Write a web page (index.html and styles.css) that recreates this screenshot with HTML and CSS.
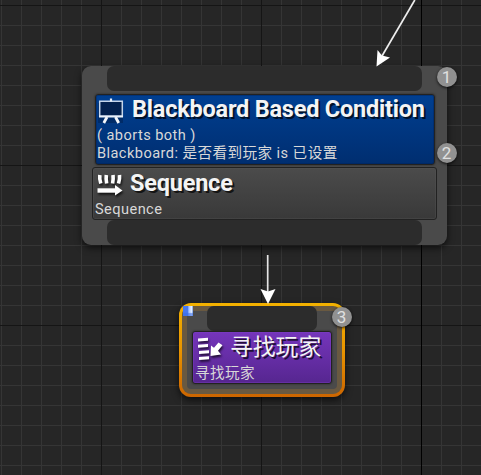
FILE: index.html
```html
<!DOCTYPE html>
<html lang="zh-CN">
<head>
<meta charset="utf-8">
<title>Behavior Tree</title>
<link rel="stylesheet" href="styles.css">
</head>
<body>
<main class="canvas">
  <section class="node composite">
    <div class="pin"></div>
    <div class="block decorator">
      <div class="heading">
        <svg class="icon" width="26" height="28" viewBox="0 0 26 28">
          <path d="M1 5h25v20H1z" fill="#001c48" opacity=".45"/>
          <path d="M2.700 3.200h22.600v15H2.700z" fill="#03214f" stroke="#c5d5ea" stroke-width="1.500"/>
          <path d="M2 18.500h24M14 .5v3" stroke="#e9f1fb" stroke-width="2.200"/>
          <path d="M10 19l-3.200 6M18.500 19l3.200 6" stroke="#f3f7fc" stroke-width="2.800"/>
        </svg>
        <h1 class="title">Blackboard Based Condition</h1>
      </div>
      <p class="detail">( aborts both )</p>
      <p class="detail">Blackboard: 是否看到玩家 is 已设置</p>
    </div>
    <div class="block sequence">
      <div class="heading">
        <svg class="icon" width="26" height="24" viewBox="0 0 26 24">
          <g class="glyph" fill="none" stroke="#fff">
            <path d="M2.800 3q-.5 4 1 8.500M9.300 3q-.5 4 .4 8.500M16 3q.5 4-.4 8.500M22.500 3q.5 4-1 8.500" stroke-width="3.600"/>
            <path d="M.5 18.500h19" stroke-width="4.400"/>
            <path d="M18 13l7.500 5.500-7.500 5z" fill="#fff" stroke="none"/>
          </g>
        </svg>
        <h1 class="title">Sequence</h1>
      </div>
      <p class="detail">Sequence</p>
    </div>
    <div class="pin"></div>
    <span class="badge first">1</span>
    <span class="badge second">2</span>
  </section>

  <section class="node task">
    <div class="task-body">
      <div class="pin"></div>
      <div class="block action">
        <div class="heading">
          <svg class="icon" width="26" height="25" viewBox="0 0 26 25">
            <g class="glyph" fill="#fff">
              <path d="M1 2.500l10-.7v3l-10 .7zM1 8.700l10-.7v3l-10 .7zM2 14.900l10-.7v3l-10 .7zM2 20.900l10-.7v3l-10 .7z"/>
              <path d="M14 9.500l3 2.200 4.500-5.200 4 2.700-4.500 5.500 3 3.800L13.500 20z"/>
            </g>
          </svg>
          <h1 class="title">寻找玩家</h1>
        </div>
        <p class="detail">寻找玩家</p>
      </div>
    </div>
    <i class="flag"></i>
    <span class="badge third">3</span>
  </section>

  <svg class="wires" width="481" height="475" viewBox="0 0 481 475">
    <path d="M414.800 0L382 56" stroke="#eee" stroke-width="1.700"/>
    <path d="M376.500 66.500L377.500 50l4.500 5.500 8 2z" fill="#fff"/>
    <path d="M267.700 255v40" stroke="#e4e4e4" stroke-width="1.700"/>
    <path d="M268 304l-7.500-15 7.500 2.500 7.500-2.500z" fill="#fff"/>
  </svg>
</main>
</body>
</html>
```
FILE: styles.css
```css
* { box-sizing: border-box; }

body { margin: 0; }

.canvas {
  position: relative;
  width: 481px;
  height: 475px;
  overflow: hidden;
  font-family: Roboto, "Noto Sans CJK SC", sans-serif;
  background-color: #262626;
  background-image:
    linear-gradient(90deg, #000 1px, transparent 1px),
    linear-gradient(90deg, #151515 1px, transparent 1px),
    linear-gradient(#151515 1px, transparent 1px),
    linear-gradient(90deg, #353535 1px, transparent 1px),
    linear-gradient(#353535 1px, transparent 1px);
  background-size: 640px 640px, 160px 160px, 160px 160px, 20px 20px, 20px 20px;
  background-position: 421px 0, 101px 0, 0 5px, 1px 0, 0 5px;
}

.node {
  position: absolute;
  display: flex;
  flex-direction: column;
  box-shadow: 0 3px 7px rgba(0, 0, 0, .65);
}

.composite {
  left: 82px;
  top: 66px;
  width: 365px;
  height: 179px;
  padding: 0 10px;
  border-radius: 9px;
  background: #4a4a4a;
}

.pin {
  flex: none;
  height: 25px;
  margin: 0 15px;
  border-radius: 7px;
  background: #2c2c2c;
}

.block {
  border: 1px solid #222;
  border-radius: 3px;
}

.decorator {
  height: 71px;
  margin: 3px 2px 2px 3px;
  padding-left: 1px;
  background: linear-gradient(#003f91, #002e70);
  box-shadow: inset 0 0 0 1px rgba(0, 30, 80, .35), 0 0 2px #222;
}

.sequence {
  height: 53px;
  padding-left: 2px;
  background: linear-gradient(#4b4b4b, #393939);
  box-shadow: inset 0 0 0 1px rgba(90, 90, 90, .3);
}

.heading {
  display: flex;
  align-items: flex-start;
}

.icon {
  flex: none;
  margin-top: 3px;
  overflow: visible;
}

.glyph { filter: drop-shadow(1px 2px 1px rgba(0, 0, 0, .7)); }

.title {
  margin: 0;
  font-size: 23.500px;
  line-height: 29px;
  font-weight: 700;
  letter-spacing: -.22px;
  white-space: nowrap;
  color: #f4f4f4;
  text-shadow: 2px 2px 0 rgba(0, 0, 0, .7);
}

.detail {
  margin: 0;
  font-size: 14.600px;
  line-height: 18px;
  letter-spacing: .43px;
  white-space: nowrap;
  color: #d8d8d8;
}

.decorator .heading { height: 31px; }
.decorator .title { margin-left: 9px; }
.sequence .heading { height: 32px; }
.sequence .icon { margin: 4px 0 0 2px; }
.sequence .title { margin: 1px 0 0 7px; }

.badge {
  position: absolute;
  width: 20px;
  height: 20px;
  border-radius: 50%;
  background: #919191;
  box-shadow: 0 1px 3px rgba(0, 0, 0, .8);
  font-size: 17px;
  line-height: 20px;
  text-align: center;
  color: #e0e0e0;
}

.first { left: 354.500px; top: 1px; }
.second { left: 354.500px; top: 77px; }
.third { left: 152.500px; top: 4px; }

.task {
  left: 179px;
  top: 303px;
  width: 166px;
  height: 94px;
  padding: 3px;
  border-radius: 12px;
  background: linear-gradient(#f3b100, #e99500 50%, #cc6500);
}

.task-body {
  height: 88px;
  padding: 0 10px;
  border-radius: 9px;
  background: #4a4a4a;
  box-shadow: inset 0 0 0 5px rgba(220, 145, 35, .22);
}

.action {
  width: 140px;
  height: 53px;
  padding-left: 2px;
  background: linear-gradient(#7535bb, #562690);
  box-shadow: inset 0 0 0 1px rgba(130, 65, 200, .35), 0 0 2px #222;
}

.action .heading { height: 32px; }
.action .icon { margin: 4px 0 0 2px; }
.action .title {
  margin-left: 7px;
  font-size: 22.800px;
  line-height: 31px;
  font-weight: 400;
  letter-spacing: 0;
}

.flag {
  position: absolute;
  left: 4px;
  top: 3px;
  width: 10px;
  height: 10px;
  background: linear-gradient(90deg, #4879ee 45%, #a9c7ff 60%, #e6efff 85%, #7b9ee0);
  box-shadow: inset 0 -3px 1px rgba(60, 110, 230, .6);
}

.wires {
  position: absolute;
  left: 0;
  top: 0;
  fill: none;
}
```
